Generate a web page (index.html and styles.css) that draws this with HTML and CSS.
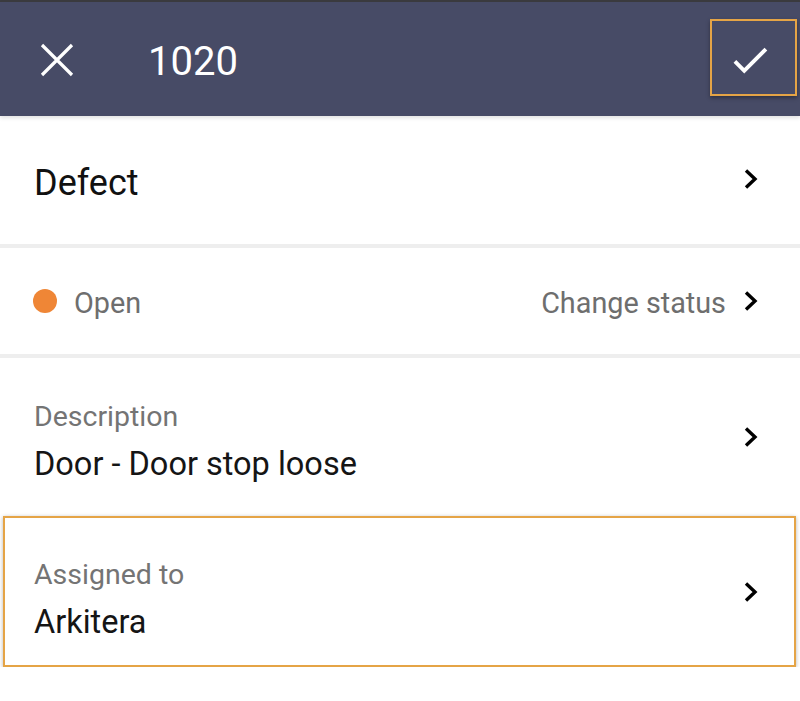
FILE: index.html
```html
<!DOCTYPE html>
<html>
<head>
<meta charset="utf-8">
<link rel="stylesheet" href="styles.css">
</head>
<body>
<div class="topstrip"></div>
<header class="appbar">
  <svg class="close" width="34" height="34" viewBox="0 0 34 34"><path d="M2 2L32 32M32 2L2 32" stroke="#fff" stroke-width="3.2" fill="none"/></svg>
  <div class="title">1020</div>
  <div class="confirm">
    <svg width="46" height="46" viewBox="0 0 24 24"><path d="M9 16.17L4.83 12l-1.42 1.41L9 19 21 7l-1.41-1.41z" fill="#fff"/></svg>
  </div>
</header>
<main>
  <div class="row row-type">
    <div class="type">Defect</div>
    <svg class="chev" width="16" height="24" viewBox="0 0 16 24"><path d="M3 3.5L12 12L3 20.5" stroke="#000" stroke-width="3.4" fill="none"/></svg>
  </div>
  <div class="sep"></div>
  <div class="row row-status">
    <span class="dot"></span>
    <span class="status">Open</span>
    <span class="change">Change status</span>
    <svg class="chev" width="16" height="24" viewBox="0 0 16 24"><path d="M3 3.5L12 12L3 20.5" stroke="#000" stroke-width="3.4" fill="none"/></svg>
  </div>
  <div class="sep"></div>
  <div class="row row-field row-desc">
    <div class="field">
      <div class="label">Description</div>
      <div class="value">Door - Door stop loose</div>
    </div>
    <svg class="chev" width="16" height="24" viewBox="0 0 16 24"><path d="M3 3.5L12 12L3 20.5" stroke="#000" stroke-width="3.4" fill="none"/></svg>
  </div>
  <div class="row row-field row-assigned">
    <div class="field">
      <div class="label">Assigned to</div>
      <div class="value">Arkitera</div>
    </div>
    <svg class="chev" width="16" height="24" viewBox="0 0 16 24"><path d="M3 3.5L12 12L3 20.5" stroke="#000" stroke-width="3.4" fill="none"/></svg>
  </div>
</main>
</body>
</html>
```
FILE: styles.css
```css
*, *::before, *::after {
  box-sizing: border-box;
}
html, body {
  margin: 0;
  padding: 0;
  background: #ffffff;
  font-family: Roboto, "Liberation Sans", Arial, sans-serif;
}
.topstrip {
  height: 2px;
  background: #3b3b3f;
}
.appbar {
  height: 114px;
  background: #474b66;
  display: flex;
  align-items: center;
  padding-left: 40px;
  box-shadow: 0 2px 4px rgba(0,0,0,0.12);
  position: relative;
  z-index: 1;
}
.close {
  flex: none;
  margin-top: 2px;
}
.title {
  margin-left: 74px;
  color: #ffffff;
  font-size: 40px;
  line-height: 46px;
  margin-top: 6px;
  flex: 1;
}
.confirm {
  width: 87px;
  height: 77px;
  border: 2px solid #e5a446;
  margin-right: 3px;
  margin-top: -3px;
  display: flex;
  align-items: center;
  justify-content: center;
  box-shadow: 0 2px 4px rgba(0,0,0,0.35);
}
.confirm svg {
  margin-top: 4px;
  margin-left: -8px;
}
.row {
  display: flex;
  align-items: center;
  padding-left: 34px;
  padding-right: 41px;
}
.chev {
  flex: none;
  margin-left: auto;
}
.sep {
  height: 4px;
  background: #eeeeee;
}
.row-type {
  height: 128px;
}
.type {
  font-size: 36px;
  color: #111111;
  line-height: 40px;
  margin-top: 5px;
}
.row-type .chev {
  margin-top: -2px;
}
.row-status {
  height: 106px;
  padding-left: 33px;
}
.dot {
  width: 24px;
  height: 24px;
  border-radius: 50%;
  background: #ef8636;
  flex: none;
}
.status {
  margin-left: 17px;
  font-size: 28.8px;
  color: #6e6e6e;
  margin-top: 4px;
}
.change {
  margin-left: auto;
  font-size: 28.8px;
  color: #6e6e6e;
  margin-right: 17px;
  margin-top: 4px;
}
.row-status .chev {
  margin-left: 0;
}
.row-desc {
  height: 158px;
}
.field {
  margin-top: 10px;
}
.label {
  font-size: 28.5px;
  line-height: 32px;
  color: #747474;
}
.value {
  font-size: 32.5px;
  line-height: 40px;
  color: #151515;
  margin-top: 11px;
}
.row-assigned {
  margin: 0 4px 0 3px;
  height: 151px;
  border: 2px solid #e5a446;
  padding-left: 29px;
  padding-right: 35px;
  box-shadow: 0 1px 4px rgba(0,0,0,0.3);
}
.row-assigned .field {
  margin-top: 18px;
}
```
